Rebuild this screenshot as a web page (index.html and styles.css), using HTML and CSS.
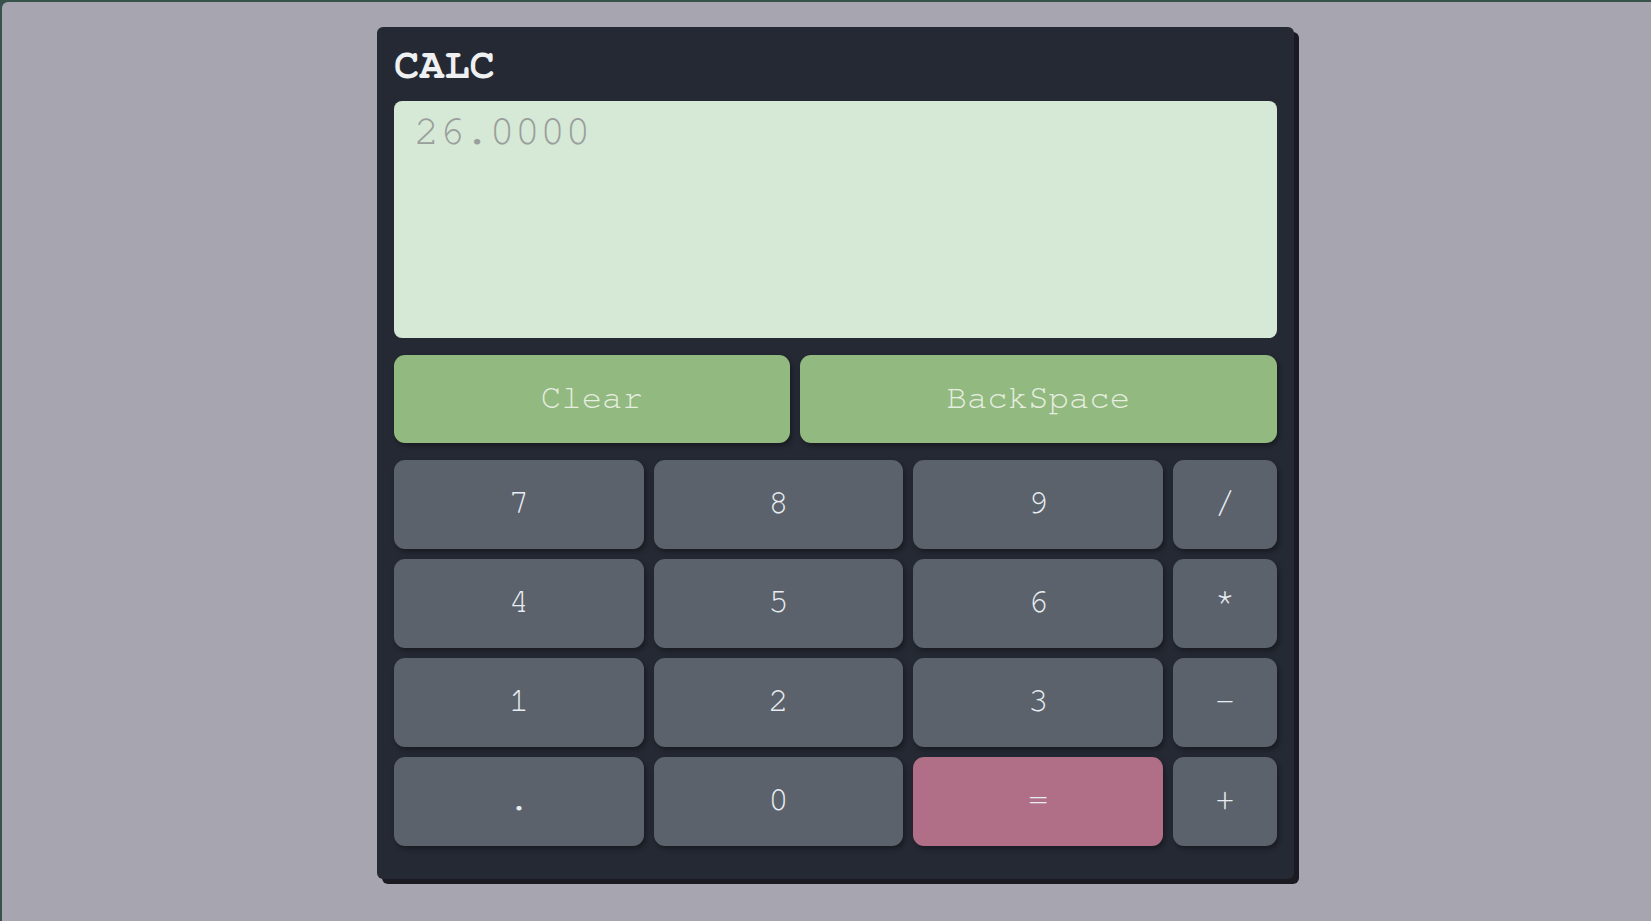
FILE: index.html
```html
<!DOCTYPE html>
<html lang="en">
<head>
<meta charset="utf-8">
<title>CALC</title>
<link rel="stylesheet" href="styles.css">
</head>
<body>
<div class="page">
  <div class="calc">
    <div class="title">CALC</div>
    <div class="display">26.0000</div>
    <div class="controls">
      <button class="btn btn-green">Clear</button>
      <button class="btn btn-green">BackSpace</button>
    </div>
    <div class="keys">
      <button class="btn key">7</button>
      <button class="btn key">8</button>
      <button class="btn key">9</button>
      <button class="btn key">/</button>
      <button class="btn key">4</button>
      <button class="btn key">5</button>
      <button class="btn key">6</button>
      <button class="btn key">*</button>
      <button class="btn key">1</button>
      <button class="btn key">2</button>
      <button class="btn key">3</button>
      <button class="btn key">-</button>
      <button class="btn key">.</button>
      <button class="btn key">0</button>
      <button class="btn key eq">=</button>
      <button class="btn key">+</button>
    </div>
  </div>
</div>
</body>
</html>
```
FILE: styles.css
```css
html {
  background: #37514b;
  height: 100%;
}
body {
  margin: 0;
  height: 100%;
}
.page {
  margin: 2px 0 0 2px;
  background: #a7a5b0;
  border-top-left-radius: 6px;
  min-height: calc(100vh - 2px);
  box-sizing: border-box;
  padding: 25px 0 0 18px;
  display: flex;
  justify-content: center;
  align-items: flex-start;
}
.calc {
  width: 917px;
  box-sizing: border-box;
  padding: 17px 17px 33px;
  background: #252933;
  border-radius: 6px;
  box-shadow: 5px 5px 0 #1b1921;
  font-family: "Nimbus Mono PS", "Nimbus Mono L", "FreeMono", "Courier", "Liberation Mono", monospace;
}
.title {
  font-size: 42px;
  font-weight: bold;
  color: #eef0f2;
  line-height: 42px;
  margin: 0 0 15px;
}
.display {
  height: 237px;
  box-sizing: border-box;
  background: #d5e9d6;
  border-radius: 8px;
  padding: 9px 20px;
  font-size: 42px;
  color: #9a9e9c;
}
.controls {
  display: flex;
  gap: 10px;
  margin-top: 17px;
}
.btn {
  height: 88px;
  border: none;
  border-radius: 11px;
  font-family: inherit;
  font-size: 34px;
  color: #e8edf2;
  box-shadow: 2px 3px 5px rgba(0, 0, 0, 0.35);
  padding: 0 0 2px;
}
.btn-green {
  flex: 1 1 auto;
  background: #92b97f;
  color: #e6eee0;
}
.keys {
  display: grid;
  grid-template-columns: 1fr 1fr 1fr 104px;
  grid-auto-rows: 89px;
  gap: 10px;
  margin-top: 17px;
}
.key {
  height: 89px;
  background: #5b626b;
  padding-bottom: 4px;
}
.eq {
  background: #b06e87;
}
```
